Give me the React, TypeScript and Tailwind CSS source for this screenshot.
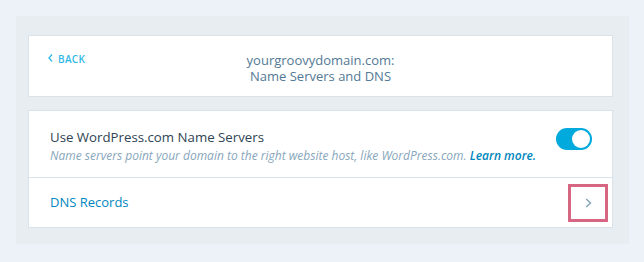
import React from "react";

export default function App() {
  return (
    <div className="w-[644px] h-[262px] bg-[#edf1f8] pt-[16px] pl-[16px]" style={{ fontFamily: '"Open Sans", sans-serif' }}>
      <div className="w-[613px] h-[228px] bg-[#e8edf2] pt-[19px] pl-[12px] pr-[16px]">
        <div className="h-[62px] bg-white border border-[#dbe3ea] grid grid-cols-[1fr_auto_1fr] px-[19px]">
          <div className="pt-[15px]">
            <button className="flex items-center gap-[5px] text-[#33b8e6] text-[10px] font-semibold tracking-[0.3px] leading-[16px]">
              <svg width="5" height="8" viewBox="0 0 5 8" className="-mt-[3px]">
                <path d="M4 0.5 L1 4 L4 7.5" stroke="#33b8e6" strokeWidth="1.3" fill="none" />
              </svg>
              BACK
            </button>
          </div>
          <div className="pt-[16px] text-center text-[13px] leading-[16px] text-[#537994]">
            yourgroovydomain.com:
            <br />
            Name Servers and DNS
          </div>
          <div />
        </div>
        <div className="mt-[13px] h-[118px] bg-white border border-[#dbe3ea] flex flex-col">
          <div className="h-[67px] border-b border-[#dbe3ea] flex items-start justify-between pl-[21px] pr-[20px] pt-[16px]">
            <div>
              <div className="text-[13.25px] leading-[20px] text-[#2e4453]">Use WordPress.com Name Servers</div>
              <div className="text-[12px] italic leading-[16px] text-[#87a6bc] mt-[1px]">
                Name servers point your domain to the right website host, like WordPress.com.{" "}
                <span className="text-[#0087be] font-semibold">Learn more.</span>
              </div>
            </div>
            <div className="mt-[1px] w-[36px] h-[22px] rounded-full bg-[#00aadc] flex items-center justify-end pr-[2px]">
              <div className="w-[18px] h-[18px] rounded-full bg-white" />
            </div>
          </div>
          <div className="flex-1 flex items-center justify-between pl-[21px] pr-[4px]">
            <div className="text-[13px] text-[#0087be]">DNS Records</div>
            <div className="w-[40px] h-[38px] border-[3px] border-[#d76683] flex items-center justify-center">
              <svg width="7" height="10" viewBox="0 0 7 10">
                <path d="M1.2 1 L5.5 5 L1.2 9" stroke="#87a6bc" strokeWidth="1.5" fill="none" />
              </svg>
            </div>
          </div>
        </div>
      </div>
    </div>
  );
}
